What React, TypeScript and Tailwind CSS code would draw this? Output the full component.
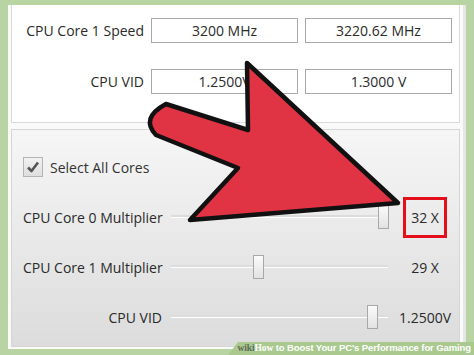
const font = { fontFamily: '"Open Sans", "Noto Sans", sans-serif' };

function ValueBox({ text }: { text: string }) {
  return (
    <div className="h-[25px] border border-[#a9a9a9] bg-white flex items-center justify-center text-[14px] text-[#2a2a2a]">
      {text}
    </div>
  );
}

function SliderRow({
  label,
  thumb,
  value,
  boxed,
}: {
  label: string;
  thumb: string;
  value: string;
  boxed?: boolean;
}) {
  return (
    <div className="h-[50px] grid grid-cols-[139px_217px_56px] gap-x-[9px] items-center pl-[11px]">
      <div className="text-right text-[14px] text-[#2a2a2a] whitespace-nowrap">{label}</div>
      <div className="relative h-[24px]">
        <div className="absolute left-0 right-0 top-[10px] h-[3px] bg-[#dcdcdc] border-b border-white" />
        <div
          className={`absolute top-0 w-[11px] h-[24px] border border-[#a8a8a8] bg-gradient-to-b from-[#fbfbfb] to-[#e2e2e2] ${thumb}`}
        />
      </div>
      <div className="flex justify-center">
        <div
          className={`text-[14px] text-[#2a2a2a] whitespace-nowrap ${
            boxed ? "border-[3px] border-[#e3101c] h-[41px] w-[44px] flex items-center justify-center" : ""
          }`}
        >
          {value}
        </div>
      </div>
    </div>
  );
}

export default function App() {
  return (
    <div className="relative w-[474px] h-[355px] overflow-hidden bg-[#b8d4a3] pt-[5px] px-[8px]" style={font}>
      <div className="w-[458px] h-[344px] bg-[#fafafa] border-r-[3px] border-[#e6e6e6] px-[3px] flex flex-col">
        {/* top panel */}
        <div className="h-[118px] bg-white border-x border-b border-[#dadada] pt-[13px]">
          <div className="grid grid-cols-[132px_147px_147px] gap-x-[7px] gap-y-[26px] items-center">
            <div className="text-right text-[14px] text-[#2a2a2a] whitespace-nowrap">CPU Core 1 Speed</div>
            <ValueBox text="3200 MHz" />
            <ValueBox text="3220.62 MHz" />
            <div className="text-right text-[14px] text-[#2a2a2a] whitespace-nowrap">CPU VID</div>
            <ValueBox text="1.2500V" />
            <ValueBox text="1.3000 V" />
          </div>
        </div>

        {/* bottom panel */}
        <div className="mt-[6px] h-[218px] border border-[#d6d6d6] bg-gradient-to-b from-[#f6f6f6] to-[#dcdcdc] pt-[12px]">
          <div className="h-[50px] flex items-center pl-[11px] gap-[7px]">
            <div className="w-[20px] h-[20px] border border-[#b4b4b4] bg-gradient-to-b from-[#f2f2f2] to-[#dedede] flex items-center justify-center">
              <svg width="14" height="14" viewBox="0 0 14 14">
                <path d="M2 7.5 L5.5 11 L12 2.5" fill="none" stroke="#555" strokeWidth="2.6" strokeLinejoin="round" />
              </svg>
            </div>
            <span className="text-[14px] text-[#333]">Select All Cores</span>
          </div>
          <SliderRow label="CPU Core 0 Multiplier" thumb="left-[207px]" value="32 X" boxed />
          <SliderRow label="CPU Core 1 Multiplier" thumb="left-[82px]" value="29 X" />
          <SliderRow label="CPU VID" thumb="left-[196px]" value="1.2500V" />
        </div>
      </div>

      {/* red arrow */}
      <svg className="absolute left-0 top-0 pointer-events-none" width="474" height="355" viewBox="0 0 474 355">
        <path
          d="M166 104 L248 130 L247 63 L398 203 L190 220 L238 168 L156 135 Q140 118 166 104 Z"
          fill="#e03343"
          stroke="#111"
          strokeWidth="4.5"
          strokeLinejoin="round"
        />
      </svg>

      {/* watermark */}
      <div
        className="absolute right-0 bottom-0 h-[13px] w-[246px] bg-[#a9c98f] flex items-center justify-end pr-[3px] text-[9.5px] font-bold text-white whitespace-nowrap tracking-[-0.1px]"
        style={{ clipPath: "polygon(10px 0, 100% 0, 100% 100%, 0 100%)", fontFamily: '"Liberation Sans", Arial, sans-serif' }}
      >
        <span className="text-[#5f6b57]" style={{ fontFamily: '"Liberation Serif", serif' }}>wiki</span>
        <span style={{ fontFamily: '"Liberation Serif", serif' }}>How</span>
        <span>&nbsp;to Boost Your PC's Performance for Gaming</span>
      </div>
    </div>
  );
}
